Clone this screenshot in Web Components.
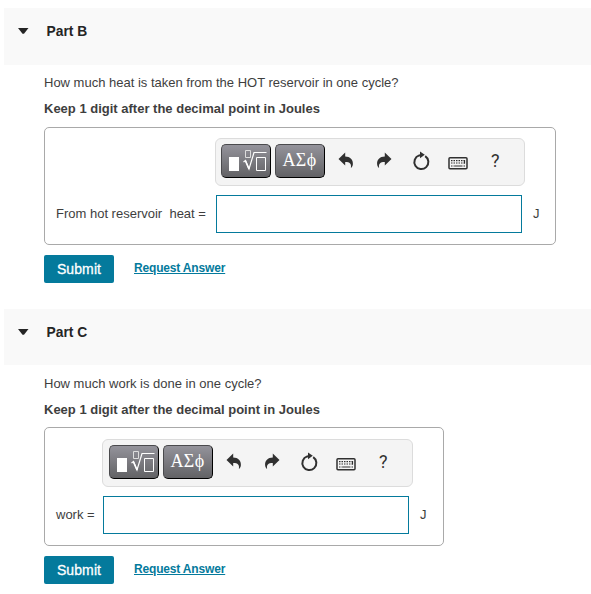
<!DOCTYPE html>
<html lang="en">
<head>
<meta charset="utf-8">
<title>Homework</title>
<style>
html,body{margin:0;background:#fff}
body{height:594px;overflow:hidden;font:13px/16px "Liberation Sans",Arial,sans-serif;color:#3e3e3e}
</style>
</head>
<body>
<part-section heading="Part B" style="--top:8px;--head:57px;--pad:10px;--card:512px;--label:160px">
  <span slot="question">How much heat is taken from the HOT reservoir in one cycle?</span>
  <span slot="hint">Keep 1 digit after the decimal point in Joules</span>
  <span slot="label">From hot reservoir &nbsp;heat =</span>
</part-section>
<part-section heading="Part C" style="--top:26px;--head:56px;--pad:11px;--gap:11px;--lift:-1px;--card:400px;--label:47px;--bar:311px;--inset:6px">
  <span slot="question">How much work is done in one cycle?</span>
  <span slot="hint">Keep 1 digit after the decimal point in Joules</span>
  <span slot="label">work =</span>
</part-section>
<script>
customElements.define('math-toolbar', class extends HTMLElement {
  constructor() {
    super();
    this.attachShadow({mode: 'open'}).innerHTML = `<style>
:host{display:flex;align-items:center;box-sizing:border-box;width:var(--bar,310px);height:48px;padding:0 0 0 var(--inset,5px);border:1px solid #dcdcdc;border-radius:6px;background:#f4f4f4;color:#303030}
button{box-sizing:border-box;flex:none;width:50px;height:34px;margin:0 4px 2px 0;padding:0;border:1px solid #4a4a4d;border-right-color:#000;border-bottom:1.5px solid #000;border-radius:5px;background:linear-gradient(#94939b,#626265);color:#fff;display:flex;align-items:center;justify-content:center}
.greek{font:18px/20px "Liberation Serif",serif;letter-spacing:.3px;padding:0 1px 2px 0}
svg{display:block;flex:none}
.i{width:37.300px;height:32px;overflow:visible}
.q{width:36px;text-align:center;font:18px/32px Roboto,sans-serif;margin-top:-2px}
</style>
<button aria-label="Templates"><svg width="48" height="32" viewBox="0 0 48 32"><path fill="#fff" d="M7 12h10v14H7z"/><g fill="none" stroke="#fff"><path stroke="#ddd" d="M23.500 5.500h5v7h-5z"/><path stroke-width="1.200" d="M21.500 17l2-1.500 3.500 8.500L32 7.500H44.500"/><path stroke-width="1.600" d="M23.500 16l3.500 8"/><path d="M34.500 12.500h9v13h-9z"/></g></svg></button>
<button class="greek">ΑΣϕ</button>
<svg class="i" style="margin-left:-1px" viewBox="0 0 37.300 32"><path fill="#303030" d="M10.500 13L17.200 6.500v4c5 .2 8 3 7.700 7.500-.1 1.800-.7 3-2 4 .6-4-.8-6-5.700-6v3.600z"/></svg>
<svg class="i" viewBox="0 0 37.300 32"><path fill="#303030" d="M26.500 13L19.800 6.500v4c-5 .2-8 3-7.700 7.500.1 1.800.7 3 2 4-.6-4 .8-6 5.700-6v3.600z"/></svg>
<svg class="i" viewBox="0 0 37.300 32"><path fill="none" stroke="#303030" stroke-width="2" d="M22.200 10.200a7 7 0 1 1-6-.8l2.500-.3"/><path fill="#303030" d="M17 5.500l4.800 3.300-4.800 3.500z"/></svg>
<svg class="i" viewBox="0 0 37.300 32"><rect x="9" y="11.800" width="18" height="11" rx="1" fill="none" stroke="#303030" stroke-width="1.500"/><g stroke="#303030" stroke-width="1.200"><path stroke-dasharray="1.500 1" d="M11 14.600H25.500M11 17H25.500M11 20H14.500M23.500 20H25.500"/><path d="M14.500 20h8M24.500 14v3.500"/></g></svg>
<span class="q">?</span>`;
  }
});
customElements.define('answer-field', class extends HTMLElement {
  constructor() {
    super();
    this.attachShadow({mode: 'open'}).innerHTML = `<style>
:host{display:grid;grid-template-columns:var(--label) 310px auto;grid-template-rows:48px 38px;row-gap:9px;box-sizing:border-box;width:var(--card);padding:var(--pad) 0 11px 10px;border:1px solid #a9a9a9;border-radius:5px}
math-toolbar{grid-column:2;grid-row:1}
.label{grid-row:2;grid-column:1;padding:11px 0 0 1px;white-space:nowrap}
.box{grid-row:2;grid-column:2;box-sizing:border-box;width:306px;height:38px;margin-left:1px;border:1px solid #047a9c;background:#fff}
.unit{grid-row:2;grid-column:3;padding:11px 0 0 8px}
</style><math-toolbar></math-toolbar><div class="label"><slot></slot></div><div class="box" role="textbox"></div><div class="unit">J</div>`;
  }
});
customElements.define('answer-actions', class extends HTMLElement {
  constructor() {
    super();
    this.attachShadow({mode: 'open'}).innerHTML = `<style>
:host{display:flex;height:28px;margin-top:10px;gap:20px}
button{width:70px;height:28px;border:0;border-radius:2px;padding:0;background:#047a9c;color:#fff;font:14px/28px "Liberation Sans",sans-serif;-webkit-text-stroke:.3px #fff;letter-spacing:.1px}
a{color:#047a9c;font-weight:bold;font-size:12px;line-height:26px;letter-spacing:-.17px;text-decoration:underline}
</style><button>Submit</button><a>Request Answer</a>`;
  }
});
customElements.define('part-section', class extends HTMLElement {
  constructor() {
    super();
    this.attachShadow({mode: 'open'}).innerHTML = `<style>
:host{display:block;padding-top:var(--top)}
header{display:flex;height:var(--head);box-sizing:border-box;margin-left:4px;padding:15px 0 0 14px;background:#f9f9f9;color:#252525}
svg{margin:5px 17px 0 0}
h2{margin:1px 0 0 .5px;font:bold 13.800px/16px "Liberation Sans",sans-serif}
main{padding:var(--gap,10px) 0 0 44px}
.q{height:26px;white-space:nowrap}
.h{height:26px;font-weight:bold;white-space:nowrap}
answer-field{margin-top:var(--lift,0)}
</style><header><svg width="11" height="7" viewBox="0 0 11 7"><path fill="#252525" d="M0 0h10.500L6 5.700H4.500z"/></svg><h2></h2></header>
<main><div class="q"><slot name="question"></slot></div><div class="h"><slot name="hint"></slot></div>
<answer-field><slot name="label"></slot></answer-field><answer-actions></answer-actions></main>`;
    this.shadowRoot.querySelector('h2').textContent = this.getAttribute('heading');
  }
});
</script>
</body>
</html>
